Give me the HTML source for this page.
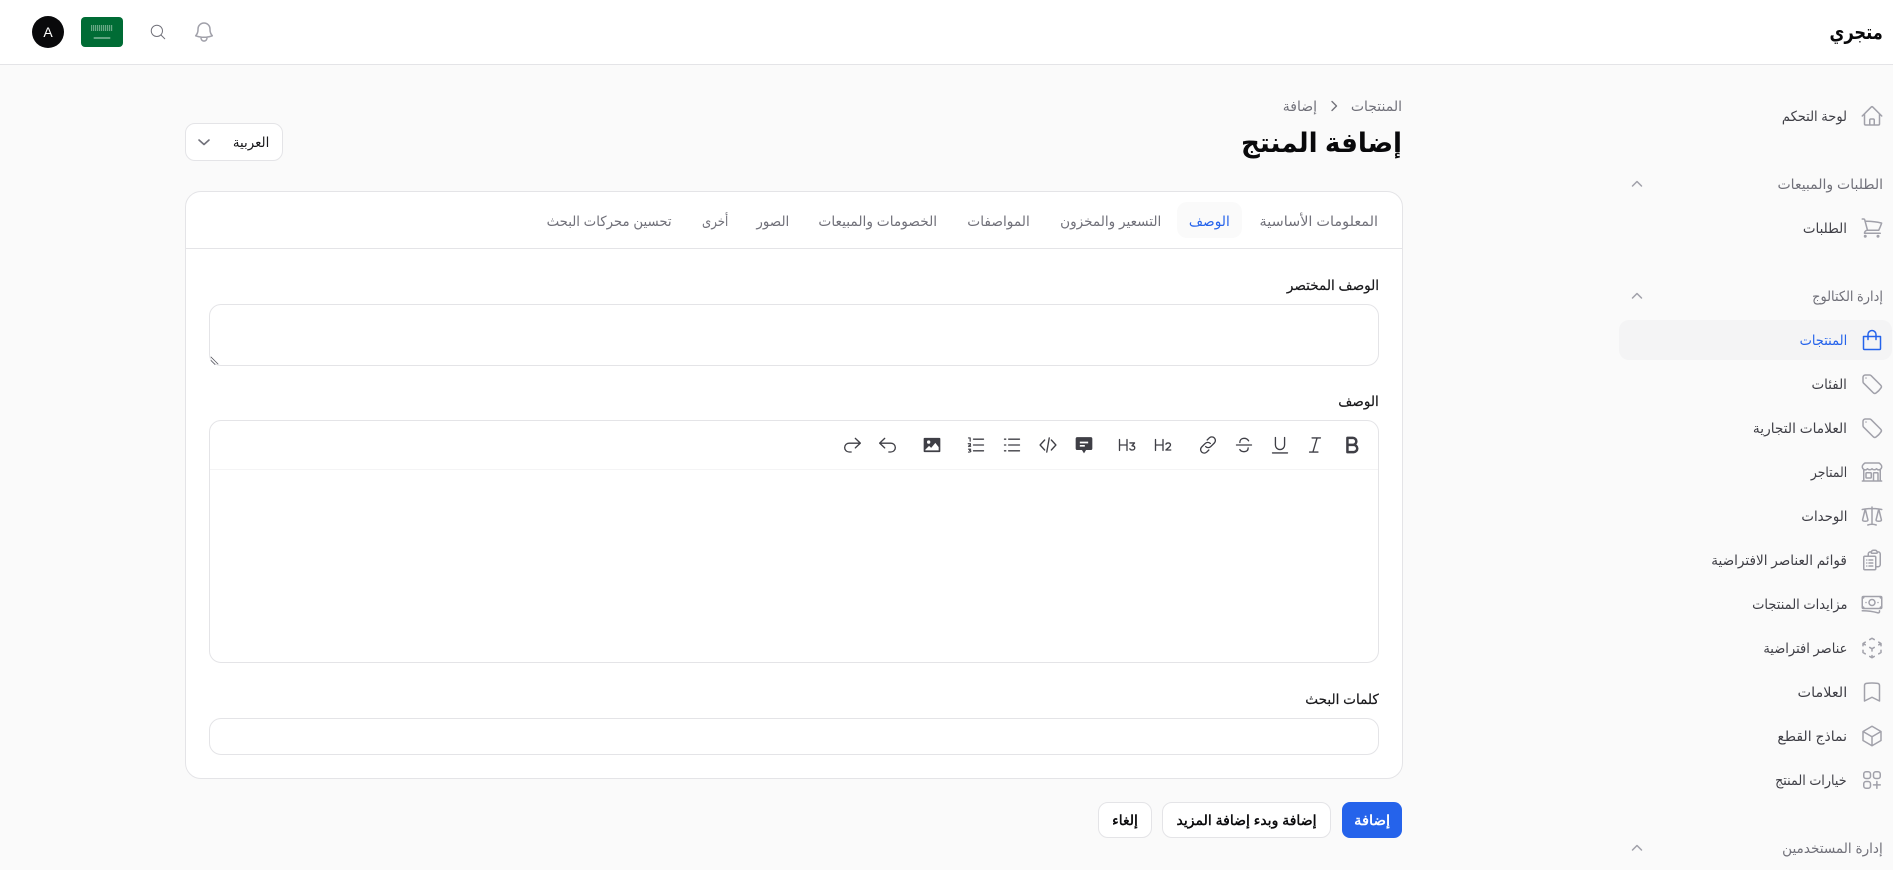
<!DOCTYPE html>
<html lang="ar" dir="rtl">
<head>
<meta charset="utf-8">
<title>إضافة المنتج</title>
<style>
*{box-sizing:border-box}
html,body{margin:0;padding:0;width:1893px;height:870px;overflow:hidden;background:#fafafa;font-family:"Liberation Sans","DejaVu Sans",sans-serif;color:#09090b}
.abs{position:absolute}
.t{position:absolute;white-space:nowrap;direction:rtl;transform:translateY(-50%) scaleX(var(--s,1));transform-origin:right center;line-height:1.4}
.nav{font-size:14px;color:#3f3f46;right:46px}
.head{font-size:14px;color:#71717a;right:10px}
.tab{font-size:14px;color:#71717a;top:222px}
.lab{font-size:14px;color:#18181b;right:514px;-webkit-text-stroke:.2px #18181b;--s:.97}
.box{position:absolute;background:#fff;border:1px solid #e4e4e7;border-radius:12px}
.bt{display:inline-block;-webkit-text-stroke:.45px currentColor;transform:scaleX(var(--s,1))}
svg{position:absolute;fill:none;stroke-linecap:round;stroke-linejoin:round}
.ic{width:24px;height:24px;right:9px;stroke:#a1a1aa;stroke-width:1.5}
.tb{width:20px;height:20px;top:435px;stroke:#3f3f46;stroke-width:1.6}
.chev{width:14px;height:14px;left:1630px;stroke:#a1a1aa;stroke-width:1.5}
</style>
</head>
<body>
<!-- header -->
<div class="abs" style="left:0;top:0;width:1893px;height:65px;background:#fff;border-bottom:1px solid #e4e4e7"></div>
<div class="t" style="right:10px;top:33px;font-size:20px;font-weight:700;--s:.81">متجري</div>
<div class="abs" style="left:32px;top:16px;width:32px;height:32px;border-radius:50%;background:#09090b;color:#fff;font-size:14px;line-height:32px;text-align:center">A</div>
<div class="abs" style="left:81px;top:17px;width:42px;height:30px;border-radius:4px;background:#006c35"></div>
<svg style="left:81px;top:17px;width:42px;height:30px" viewBox="0 0 42 30"><path d="M10 9h22M10 11h22M10 13h22" stroke="#cfe3d8" stroke-width="1.100" stroke-dasharray="1.200 .8" stroke-linecap="butt"/><path d="M13 21h16" stroke="#fff" stroke-width=".8"/></svg>
<svg style="left:149px;top:23px;width:18px;height:18px;stroke:#71717a;stroke-width:1.300" viewBox="0 0 24 24"><path d="M21 21l-5.197-5.197m0 0A7.500 7.500 0 105.196 5.196a7.500 7.500 0 0010.607 10.607z"/></svg>
<svg style="left:192px;top:20px;width:24px;height:24px;stroke:#a1a1aa;stroke-width:1.5" viewBox="0 0 24 24"><path d="M14.857 17.082a23.848 23.848 0 005.454-1.310A8.967 8.967 0 0118 9.750v-.7V9A6 6 0 006 9v.75a8.967 8.967 0 01-2.312 6.022c1.733.64 3.560 1.085 5.455 1.310m5.714 0a24.255 24.255 0 01-5.714 0m5.714 0a3 3 0 11-5.714 0"/></svg>

<!-- sidebar -->
<div class="abs" style="left:1619px;top:320px;width:273px;height:40px;border-radius:10px;background:#f4f4f5"></div>
<div class="t nav" style="top:117px;--s:.93">لوحة التحكم</div>
<div class="t head" style="top:185px">الطلبات والمبيعات</div>
<div class="t nav" style="top:229px;--s:.96">الطلبات</div>
<div class="t head" style="top:297px;--s:.92">إدارة الكتالوج</div>
<div class="t nav" style="top:341px;color:#2563eb;--s:.93">المنتجات</div>
<div class="t nav" style="top:385px;--s:.96">الفئات</div>
<div class="t nav" style="top:429px;--s:.98">العلامات التجارية</div>
<div class="t nav" style="top:473px;--s:.88">المتاجر</div>
<div class="t nav" style="top:517px;--s:.95">الوحدات</div>
<div class="t nav" style="top:561px;--s:.97">قوائم العناصر الافتراضية</div>
<div class="t nav" style="top:605px;--s:.93">مزايدات المنتجات</div>
<div class="t nav" style="top:649px;--s:.93">عناصر افتراضية</div>
<div class="t nav" style="top:693px;--s:1.03">العلامات</div>
<div class="t nav" style="top:737px">نماذج القطع</div>
<div class="t nav" style="top:781px;--s:.91">خيارات المنتج</div>
<div class="t head" style="top:849px;--s:.97">إدارة المستخدمين</div>

<svg class="chev" style="top:177px" viewBox="0 0 14 14"><path d="M2.500 9L7 4.500 11.500 9"/></svg>
<svg class="chev" style="top:289px" viewBox="0 0 14 14"><path d="M2.500 9L7 4.500 11.500 9"/></svg>
<svg class="chev" style="top:841px" viewBox="0 0 14 14"><path d="M2.500 9L7 4.500 11.500 9"/></svg>

<svg class="ic" style="top:104px" viewBox="0 0 24 24"><path d="M2.250 12l8.954-8.955c.44-.439 1.152-.439 1.591 0L21.750 12M4.500 9.750v10.125c0 .621.504 1.125 1.125 1.125H9.750v-4.875c0-.621.504-1.125 1.125-1.125h2.250c.621 0 1.125.504 1.125 1.125V21h4.125c.621 0 1.125-.504 1.125-1.125V9.750M8.250 21h8.250"/></svg>
<svg class="ic" style="top:216px" viewBox="0 0 24 24"><path d="M2.250 3h1.386c.51 0 .955.343 1.087.835l.383 1.437M7.500 14.250a3 3 0 00-3 3h15.750m-12.750-3h11.218c1.121-2.300 2.100-4.684 2.924-7.138a60.114 60.114 0 00-16.536-1.840M7.500 14.250L5.106 5.272M6 20.250a.75.75 0 11-1.500 0 .75.75 0 011.500 0zm12.750 0a.75.75 0 11-1.500 0 .75.75 0 011.500 0z"/></svg>
<svg class="ic" style="top:328px;stroke:#2563eb" viewBox="0 0 24 24"><path d="M3.500 8.500h17v12a1 1 0 0 1-1 1h-15a1 1 0 0 1-1-1zM8 11.500V6.500a4 4 0 0 1 8 0v5"/></svg>
<svg class="ic" style="top:372px" viewBox="0 0 24 24"><path d="M9.568 3H5.250A2.250 2.250 0 003 5.250v4.318c0 .597.237 1.170.659 1.591l9.581 9.581c.699.699 1.780.872 2.607.33a18.095 18.095 0 005.223-5.223c.542-.827.369-1.908-.33-2.607L11.160 3.660A2.250 2.250 0 009.568 3zM6 6h.008v.008H6V6z"/></svg>
<svg class="ic" style="top:416px" viewBox="0 0 24 24"><path d="M9.568 3H5.250A2.250 2.250 0 003 5.250v4.318c0 .597.237 1.170.659 1.591l9.581 9.581c.699.699 1.780.872 2.607.33a18.095 18.095 0 005.223-5.223c.542-.827.369-1.908-.33-2.607L11.160 3.660A2.250 2.250 0 009.568 3zM6 6h.008v.008H6V6z"/></svg>
<svg class="ic" style="top:460px" viewBox="0 0 24 24"><path d="M13.500 21v-7.500a.75.75 0 01.75-.75h3a.75.75 0 01.75.75V21m-4.500 0H2.360m11.140 0H18m0 0h3.640m-1.390 0V9.349m-16.500 11.650V9.350m0 0a3.001 3.001 0 003.750-.615A2.993 2.993 0 009.750 9.750c.896 0 1.700-.393 2.250-1.016a2.993 2.993 0 002.250 1.016c.896 0 1.700-.393 2.250-1.016a3.001 3.001 0 003.750.614m-16.500 0a3.004 3.004 0 01-.621-4.720L4.318 3.440A1.500 1.500 0 015.378 3h13.243a1.500 1.500 0 011.060.44l1.190 1.189a3 3 0 01-.621 4.720m-13.500 8.650h3.750a.75.75 0 00.75-.75V13.500a.75.75 0 00-.75-.75H6.750a.75.75 0 00-.75.75v3.750c0 .415.336.75.75.75z"/></svg>
<svg class="ic" style="top:504px" viewBox="0 0 24 24"><path d="M12 3v17.250m0 0c-1.472 0-2.882.265-4.185.75M12 20.250c1.472 0 2.882.265 4.185.75M18.750 4.970A48.416 48.416 0 0012 4.500c-2.291 0-4.545.16-6.750.47m13.500 0c1.010.143 2.010.317 3 .52m-3-.52l2.620 10.726c.122.499-.106 1.028-.589 1.202a5.988 5.988 0 01-2.031.352 5.988 5.988 0 01-2.031-.352c-.483-.174-.711-.703-.59-1.202L18.750 4.970zm-16.500.52c.99-.203 1.990-.377 3-.52m0 0l2.620 10.726c.122.499-.106 1.028-.589 1.202a5.989 5.989 0 01-2.031.352 5.989 5.989 0 01-2.031-.352c-.483-.174-.711-.703-.59-1.202L5.250 4.971z"/></svg>
<svg class="ic" style="top:548px" viewBox="0 0 24 24"><path d="M9 12h3.750M9 15h3.750M9 18h3.750m3 .75H18a2.250 2.250 0 002.250-2.250V6.108c0-1.135-.845-2.098-1.976-2.192a48.424 48.424 0 00-1.123-.08m-5.801 0c-.065.21-.1.433-.1.664 0 .414.336.75.75.75h4.500a.75.75 0 00.75-.75 2.250 2.250 0 00-.1-.664m-5.800 0A2.251 2.251 0 0113.500 2.250H15c1.012 0 1.867.668 2.150 1.586m-5.800 0c-.376.023-.75.05-1.124.08C9.095 4.010 8.250 4.973 8.250 6.108V8.250m0 0H4.875c-.621 0-1.125.504-1.125 1.125v11.250c0 .621.504 1.125 1.125 1.125h9.750c.621 0 1.125-.504 1.125-1.125V9.375c0-.621-.504-1.125-1.125-1.125H8.250zM6.750 12h.008v.008H6.750V12zm0 3h.008v.008H6.750V15zm0 3h.008v.008H6.750V18z"/></svg>
<svg class="ic" style="top:592px" viewBox="0 0 24 24"><path d="M2.250 18.750a60.070 60.070 0 0115.797 2.101c.727.198 1.453-.342 1.453-1.096V18.750M3.750 4.500v.75A.75.75 0 013 6h-.75m0 0v-.375c0-.621.504-1.125 1.125-1.125H20.250M2.250 6v9m18-10.500v.75c0 .414.336.75.75.75h.75m-1.500-1.500h.375c.621 0 1.125.504 1.125 1.125v9.750c0 .621-.504 1.125-1.125 1.125h-.375m1.500-1.500H21a.75.75 0 00-.75.75v.75m0 0H3.750m0 0h-.375a1.125 1.125 0 01-1.125-1.125V15m1.500 1.500v-.75A.75.75 0 003 15h-.75M15 10.500a3 3 0 11-6 0 3 3 0 016 0zm3 0h.008v.008H18V10.500zm-12 0h.008v.008H6V10.500z"/></svg>
<svg class="ic" style="top:636px" viewBox="0 0 24 24"><path d="M21 7.500l-2.250-1.313M21 7.500v2.250m0-2.250l-2.250 1.313M3 7.500l2.250-1.313M3 7.500l2.250 1.313M3 7.500v2.250m9 3l2.250-1.313M12 12.750l-2.250-1.313M12 12.750V15m0 6.750l2.250-1.313M12 21.750V19.500m0 2.250l-2.250-1.313m0-16.875L12 2.250l2.250 1.313M21 14.250v2.250l-2.250 1.313m-13.500 0L3 16.500v-2.250"/></svg>
<svg class="ic" style="top:680px" viewBox="0 0 24 24"><path d="M17.593 3.322c1.100.128 1.907 1.077 1.907 2.185V21L12 17.250 4.500 21V5.507c0-1.108.806-2.057 1.907-2.185a48.507 48.507 0 0111.186 0z"/></svg>
<svg class="ic" style="top:724px" viewBox="0 0 24 24"><path d="M21 7.500l-9-5.250L3 7.500m18 0l-9 5.250m9-5.250v9l-9 5.250M3 7.500l9 5.250M3 7.500v9l9 5.250m0-9v9"/></svg>
<svg class="ic" style="top:768px" viewBox="0 0 24 24"><path d="M13.500 16.875h3.375m0 0h3.375m-3.375 0V13.500m0 3.375v3.375M6 10.500h2.250a2.250 2.250 0 002.250-2.250V6a2.250 2.250 0 00-2.250-2.250H6A2.250 2.250 0 003.750 6v2.250A2.250 2.250 0 006 10.500zm0 9.750h2.250A2.250 2.250 0 0010.500 18v-2.250a2.250 2.250 0 00-2.250-2.250H6a2.250 2.250 0 00-2.250 2.250V18A2.250 2.250 0 006 20.250zm9.750-9.750H18a2.250 2.250 0 002.250-2.250V6A2.250 2.250 0 0018 3.750h-2.250A2.250 2.250 0 0013.500 6v2.250a2.250 2.250 0 002.250 2.250z"/></svg>

<!-- page header -->
<div class="t" style="right:491px;top:107px;font-size:14px;color:#71717a">المنتجات</div>
<svg style="left:1327px;top:99px;width:14px;height:14px;stroke:#71717a;stroke-width:1.400" viewBox="0 0 14 14"><path d="M5 2.500L9.500 7 5 11.500"/></svg>
<div class="t" style="right:576px;top:107px;font-size:14px;color:#71717a">إضافة</div>
<div class="t" style="right:491px;top:144px;font-size:27px;font-weight:700;color:#09090b;--s:.97">إضافة المنتج</div>

<!-- language select -->
<div class="box" style="left:185px;top:123px;width:98px;height:38px;border-radius:10px"></div>
<div class="t" style="right:1624px;top:143px;font-size:14px;color:#18181b;--s:.95">العربية</div>
<svg style="left:197px;top:135px;width:14px;height:14px;stroke:#71717a;stroke-width:1.600" viewBox="0 0 14 14"><path d="M2 5l5 4.500L12 5"/></svg>

<!-- card -->
<div class="box" style="left:185px;top:191px;width:1218px;height:588px;border-radius:16px"></div>
<div class="abs" style="left:186px;top:248px;width:1216px;height:1px;background:#e4e4e7"></div>
<div class="abs" style="left:1177px;top:202px;width:65px;height:36px;border-radius:10px;background:#fafafa"></div>
<div class="t tab" style="right:515px;--s:1.03">المعلومات الأساسية</div>
<div class="t tab" style="right:663px;color:#2563eb;--s:.98">الوصف</div>
<div class="t tab" style="right:732px;--s:.97">التسعير والمخزون</div>
<div class="t tab" style="right:863px;--s:.98">المواصفات</div>
<div class="t tab" style="right:956px;--s:.98">الخصومات والمبيعات</div>
<div class="t tab" style="right:1104px;--s:.96">الصور</div>
<div class="t tab" style="right:1165px;--s:.84">أخرى</div>
<div class="t tab" style="right:1221px;--s:.95">تحسين محركات البحث</div>

<div class="t lab" style="top:286px">الوصف المختصر</div>
<div class="box" style="left:209px;top:304px;width:1170px;height:62px"></div>
<svg style="left:210px;top:356px;width:9px;height:9px;stroke:#52525b;stroke-width:.8" viewBox="0 0 9 9"><path d="M1 1l7 7M1 4.500l4 4" stroke-dasharray="1 .6"/></svg>

<div class="t lab" style="top:402px">الوصف</div>
<div class="box" style="left:209px;top:420px;width:1170px;height:243px"></div>
<div class="abs" style="left:210px;top:469px;width:1168px;height:1px;background:#f4f4f5"></div>

<!-- toolbar -->
<svg class="tb" style="left:1342px;stroke-width:3" viewBox="0 0 24 24"><path d="M6.500 3.500h6.500a4.200 4.200 0 0 1 0 8.400H6.500zM6.500 11.900h7.500a4.300 4.300 0 0 1 0 8.600H6.500z"/></svg>
<svg class="tb" style="left:1305px" viewBox="0 0 24 24"><path d="M8.500 3.500h10M5.500 20.500h10M14.500 3.500l-5 17"/></svg>
<svg class="tb" style="left:1270px" viewBox="0 0 24 24"><path d="M6.500 3V12a5.500 5.500 0 0 0 11 0V3M3 21.500h18"/></svg>
<svg class="tb" style="left:1234px" viewBox="0 0 24 24"><path d="M3 12h18M7 9c0-3 2-5 5-5s4.500 1.200 5.500 3M17 15.500c0 3-2 4.500-5 4.500-2.300 0-4.200-1-5-2.500"/></svg>
<svg class="tb" style="left:1198px" viewBox="0 0 24 24"><path d="M11 6l2.500-2.500a4.300 4.300 0 0 1 6.100 6.100l-4.300 4.300a4.300 4.300 0 0 1-6.100 0M13 18l-2.500 2.500a4.300 4.300 0 0 1-6.100-6.100l4.300-4.300a4.300 4.300 0 0 1 6.100 0"/></svg>
<svg class="tb" style="left:1153px" viewBox="0 0 24 24"><path d="M3 5.500v13M12 5.500v13M3 12h9M15.500 11c.5-1 1.500-1.500 2.700-1.500 1.500 0 2.800.9 2.800 2.400 0 1-.6 1.700-1.500 2.500L15.500 18h5.800"/></svg>
<svg class="tb" style="left:1117px" viewBox="0 0 24 24"><path d="M3 5.500v13M12 5.500v13M3 12h9M15.500 9.500h5.500l-3 3.500c1.800 0 3.300.8 3.300 2.400 0 1.700-1.500 2.600-3.100 2.600-1.200 0-2.200-.5-2.800-1.400"/></svg>
<svg class="tb" style="left:1074px;stroke:none;fill:#3f3f46" viewBox="0 0 24 24"><path d="M4 2.500h16a2 2 0 0 1 2 2v11.500a2 2 0 0 1-2 2h-5.500L12 22 9.500 18H4a2 2 0 0 1-2-2V4.500a2 2 0 0 1 2-2z"/><path d="M7 8h10v2H7zM7 12h6v2H7z" fill="#fff"/></svg>
<svg class="tb" style="left:1038px" viewBox="0 0 24 24"><path d="M8 6L2.500 12 8 18M16 6l5.500 6-5.500 6M13.500 3.500l-3 17"/></svg>
<svg class="tb" style="left:1002px" viewBox="0 0 24 24"><path d="M8 5h13M8 12h13M8 19h13M3 5h1.500M3 12h1.500M3 19h1.500"/></svg>
<svg class="tb" style="left:966px" viewBox="0 0 24 24"><path d="M9 5h12M9 12h12M9 19h12"/><path d="M3 3.500h2v4M2.700 10.500h2.600v1.400L3 13.500h2.600M3 17h2.600l-1.300 1.500c1 0 1.500.4 1.500 1 0 .7-.7 1-2.800 1" stroke-width="1.400"/></svg>
<svg class="tb" style="left:922px;stroke:none;fill:#3f3f46" viewBox="0 0 24 24"><path fill-rule="evenodd" d="M3 3.500h18a1 1 0 0 1 1 1v15a1 1 0 0 1-1 1H3a1 1 0 0 1-1-1v-15a1 1 0 0 1 1-1zM4 18.500h16v-4L16 9.500 11 15.500 8.500 13 4 17.500zM8 6.500a2 2 0 1 0 0 4 2 2 0 0 0 0-4z"/></svg>
<svg class="tb" style="left:878px" viewBox="0 0 24 24"><path d="M8 4L2 9.800 8 15.500M2 9.800H15.500a5.300 5.300 0 0 1 0 10.600H13"/></svg>
<svg class="tb" style="left:842px" viewBox="0 0 24 24"><path d="M16 4L22 9.800 16 15.500M22 9.800H8.500a5.300 5.300 0 0 0 0 10.600H11"/></svg>

<div class="t lab" style="top:700px">كلمات البحث</div>
<div class="box" style="left:209px;top:718px;width:1170px;height:37px"></div>

<!-- buttons -->
<div class="abs" style="left:1342px;top:802px;width:60px;height:36px;border-radius:8px;background:#2563eb;color:#fff;font-size:14px;line-height:36px;text-align:center"><span class="bt" style="--s:1.05">إضافة</span></div>
<div class="box" style="left:1162px;top:802px;width:169px;height:36px;border-radius:10px;font-size:14px;line-height:34px;text-align:center;white-space:nowrap"><span class="bt">إضافة وبدء إضافة المزيد</span></div>
<div class="box" style="left:1098px;top:802px;width:54px;height:36px;border-radius:10px;font-size:14px;line-height:34px;text-align:center"><span class="bt">إلغاء</span></div>
</body>
</html>
